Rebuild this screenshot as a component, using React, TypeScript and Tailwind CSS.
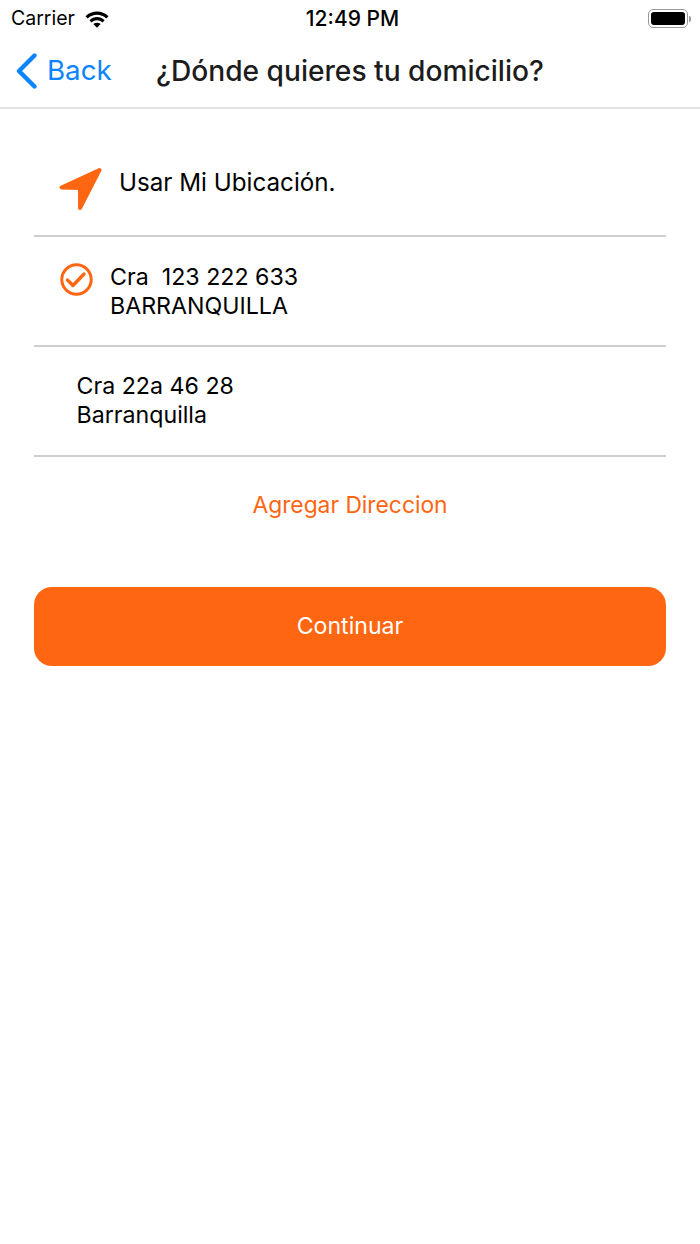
import React from 'react';

const StatusBar: React.FC = () => (
    <div className="relative flex items-center justify-between h-[37px] pl-[11px] pr-[9px] text-black">
        <div className="flex items-center gap-[10px]">
            <span className="text-[19.5px]">Carrier</span>
            <svg width="24" height="18" viewBox="0 0 24 18" fill="#000">
                <path d="M0.5 6.2 C7 0 17 0 23.5 6.2 L21.3 8.5 C16 3.6 8 3.6 2.7 8.5 Z" />
                <path d="M4.4 10.2 C9 6 15 6 19.6 10.2 L17.5 12.4 C14.2 9.5 9.8 9.5 6.5 12.4 Z" />
                <path d="M8.3 14.1 C10.5 12.3 13.5 12.3 15.7 14.1 L12 17.8 Z" />
            </svg>
        </div>
        <span className="absolute left-[5px] right-0 text-center text-[21px] font-medium pointer-events-none">12:49 PM</span>
        <div className="flex items-center">
            <div className="w-[40px] h-[19px] rounded-[5px] border border-[#9a9a9a] p-[2px]">
                <div className="w-full h-full rounded-[3px] bg-black" />
            </div>
            <div className="w-[2px] h-[6px] ml-[1px] rounded-r-full bg-[#9a9a9a]" />
        </div>
    </div>
);

const NavBar: React.FC = () => (
    <div className="relative flex items-center h-[72px] pb-[2px] border-b-2 border-[#e2e2e2]">
        <div className="flex items-center gap-[10px] pl-[16px] text-[#0a84ff]">
            <svg width="21" height="36" viewBox="0 0 21 36" fill="none">
                <path d="M18.5 2.5 L3 18 L18.5 33.5" stroke="#0a84ff" strokeWidth="4.4" strokeLinecap="round" strokeLinejoin="round" />
            </svg>
            <span className="text-[27.7px] leading-none">Back</span>
        </div>
        <h1 className="absolute left-0 right-0 text-center text-[28.15px] leading-none font-medium text-[#1c1c1c]">
            ¿Dónde quieres tu domicilio?
        </h1>
    </div>
);

const AddressRow: React.FC<{ line1: string; line2: string; selected?: boolean }> = ({ line1, line2, selected }) => (
    <div className="flex items-start h-[110px] border-b-2 border-[#cfcfcf]">
        {selected ? (
            <div className="flex items-start gap-[16px] pl-[26px] pt-[26px]">
                <svg width="34" height="34" viewBox="0 0 34 34" fill="none">
                    <circle cx="16.5" cy="16.5" r="14.7" stroke="#ff6611" strokeWidth="3" />
                    <path d="M7.5 17 L13 22.5 L24 11" stroke="#ff6611" strokeWidth="3.4" strokeLinecap="round" strokeLinejoin="round" />
                </svg>
                <div className="text-[23.2px] leading-[28.5px] text-black whitespace-pre">
                    <div>{line1}</div>
                    <div>{line2}</div>
                </div>
            </div>
        ) : (
            <div className="pl-[42.5px] pt-[25px] text-[23.2px] leading-[28.5px] text-black whitespace-pre">
                <div>{line1}</div>
                <div>{line2}</div>
            </div>
        )}
    </div>
);

const App: React.FC = () => {
    return (
        <div className="w-[700px] h-[1244px] bg-white overflow-hidden font-['Inter',sans-serif]">
            <StatusBar />
            <NavBar />

            <div className="px-[34px]">
                <div className="flex items-start gap-[16px] h-[128px] pl-[25px] pt-[58px] border-b-2 border-[#cfcfcf]">
                    <svg width="44" height="44" viewBox="0 0 44 44" fill="#ff6611" stroke="#ff6611" strokeWidth="4" strokeLinejoin="round">
                        <path d="M40.5 3 L2.5 20.5 L21 21 L21 41 Z" />
                    </svg>
                    <span className="text-[24.2px] leading-[32px] text-black">Usar Mi Ubicación.</span>
                </div>

                <AddressRow line1="Cra  123 222 633" line2="BARRANQUILLA" selected />
                <AddressRow line1="Cra 22a 46 28" line2="Barranquilla" />

                <div className="h-[97px] flex items-center justify-center text-[22.8px] text-[#ff6611]">
                    Agregar Direccion
                </div>

                <button className="mt-[33px] w-full h-[79px] rounded-[18px] bg-[#ff6611] text-white text-[23.1px]">
                    Continuar
                </button>
            </div>
        </div>
    );
};

export default App;
